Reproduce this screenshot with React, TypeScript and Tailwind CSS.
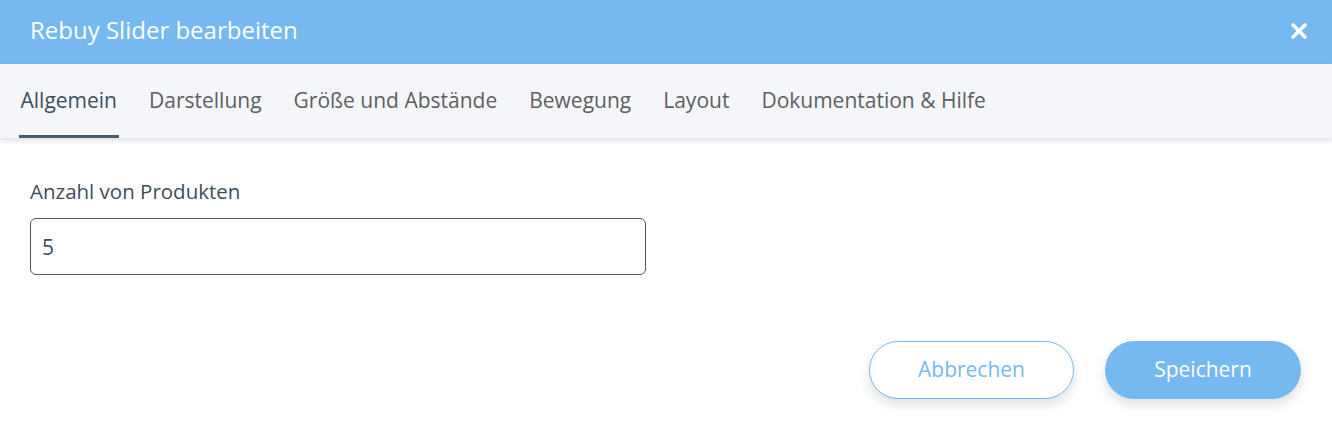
import React, { useState } from 'react';

const tabs = ['Allgemein', 'Darstellung', 'Größe und Abstände', 'Bewegung', 'Layout', 'Dokumentation & Hilfe'];

export default function App() {
    const [active, setActive] = useState(0);
    const [count, setCount] = useState('5');

    return (
        <div className="w-[1332px] h-[438px] bg-white font-['Open_Sans',sans-serif] flex flex-col">
            <div className="h-[64px] bg-[#75b9f0] flex items-center justify-between pl-[30px] pr-[24px] shrink-0">
                <h1 className="text-[24px] text-white pb-[5px]">Rebuy Slider bearbeiten</h1>
                <button className="text-white pb-[2px]">
                    <svg width="18" height="18" viewBox="0 0 18 18">
                        <path d="M3 3 L15 15 M15 3 L3 15" stroke="currentColor" strokeWidth="3.6" strokeLinecap="round" />
                    </svg>
                </button>
            </div>

            <div className="h-[74px] bg-[#f5f6fa] shadow-[0_3px_5px_rgba(0,0,0,0.12)] flex items-stretch gap-[29px] pl-[19px] shrink-0 relative z-10">
                {tabs.map((t, i) => (
                    <button
                        key={t}
                        onClick={() => setActive(i)}
                        className={`px-[1.5px] pt-[3px] flex items-center text-[21px] border-b-[3px] ${
                            i === active ? 'text-[#3d4e60] border-[#495a6c]' : 'text-[#5f5f5f] border-transparent'
                        }`}
                    >
                        {t}
                    </button>
                ))}
            </div>

            <div className="flex-1 flex flex-col px-[30px] pt-[40px]">
                <label className="text-[20.5px] text-[#3e4d5d] leading-[26px]">Anzahl von Produkten</label>
                <input
                    value={count}
                    onChange={(e) => setCount(e.target.value)}
                    className="mt-[14px] w-[616px] h-[57px] border border-[#4b5868] rounded-[6px] px-[11px] text-[21px] text-[#3e4d5d] outline-none"
                />

                <div className="flex justify-end gap-[31px] mt-[66px] pr-[1px]">
                    <button className="w-[205px] h-[58px] rounded-full border border-[#75b9f0] bg-white text-[#75b9f0] text-[21px] shadow-[0_6px_12px_rgba(0,0,0,0.12)]">
                        Abbrechen
                    </button>
                    <button className="w-[196px] h-[58px] rounded-full bg-[#75b9f0] text-white text-[21px] shadow-[0_6px_12px_rgba(0,0,0,0.12)]">
                        Speichern
                    </button>
                </div>
            </div>
        </div>
    );
}
